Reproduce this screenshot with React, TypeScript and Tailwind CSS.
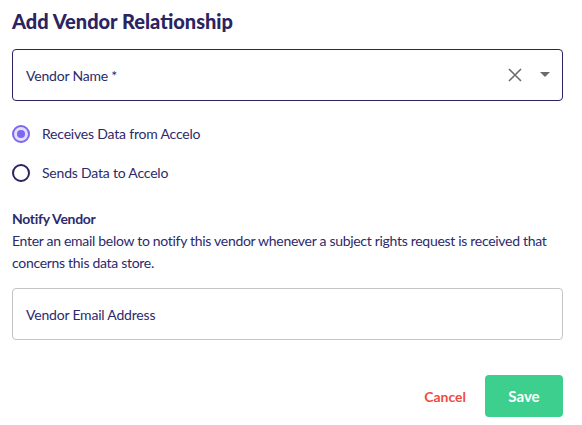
import React, { useState } from 'react';

const font = { fontFamily: 'Lato, "Noto Sans", sans-serif' };

function Radio({ checked, label, onClick }: { checked: boolean; label: string; onClick: () => void }) {
    return (
        <label className="flex items-center gap-[12px] cursor-pointer" onClick={onClick}>
            {checked ? (
                <span className="w-[18px] h-[18px] rounded-full border-2 border-[#7b68ee] bg-[#e4defc] flex items-center justify-center">
                    <span className="w-[8px] h-[8px] rounded-full bg-[#7b68ee]" />
                </span>
            ) : (
                <span className="w-[18px] h-[18px] rounded-full border-2 border-[#2a2461]" />
            )}
            <span className="text-[14px] text-[#2d2a6b] tracking-[-0.2px]">{label}</span>
        </label>
    );
}

function App() {
    const [receives, setReceives] = useState(true);
    return (
        <div className="w-[582px] h-[425px] bg-white pl-[12px] pr-[19px] pt-[8px]" style={font}>
            <h1 className="text-[20px] font-black text-[#2a2461] leading-[26px]">Add Vendor Relationship</h1>

            <div className="mt-[15px] h-[52px] border border-[#2a2461] rounded-[4px] flex items-center pl-[13px] pr-[12px]">
                <span className="flex-1 text-[14px] text-[#2d2a6b] tracking-[-0.2px]">Vendor Name *</span>
                <svg width="14" height="14" viewBox="0 0 14 14" className="mr-[18px]">
                    <path d="M1 1 L13 13 M13 1 L1 13" stroke="#6b6b6b" strokeWidth="1.6" />
                </svg>
                <svg width="10" height="6" viewBox="0 0 10 6">
                    <path d="M0 0 L10 0 L5 5 Z" fill="#6b6b6b" />
                </svg>
            </div>

            <div className="mt-[22px] flex flex-col gap-[18px]">
                <Radio checked={receives} label="Receives Data from Accelo" onClick={() => setReceives(true)} />
                <Radio checked={!receives} label="Sends Data to Accelo" onClick={() => setReceives(false)} />
            </div>

            <div className="mt-[25px] text-[#2d2a6b] tracking-[-0.3px]">
                <div className="text-[14px] font-bold leading-[22px]">Notify Vendor</div>
                <p className="text-[14px] leading-[22px]">
                    Enter an email below to notify this vendor whenever a subject rights request is received that concerns this data store.
                </p>
            </div>

            <div className="mt-[14px] h-[52px] border border-[#c4c4c4] rounded-[4px] flex items-center pl-[13px]">
                <span className="text-[14px] text-[#2d2a6b] tracking-[-0.2px]">Vendor Email Address</span>
            </div>

            <div className="mt-[35px] flex justify-end items-center gap-[19px]">
                <button className="text-[14px] font-bold text-[#ef4b3f]">Cancel</button>
                <button className="w-[78px] h-[42px] rounded-[4px] bg-[#3ccf8e] text-white text-[15px] font-bold">Save</button>
            </div>
        </div>
    );
}

export default App;
